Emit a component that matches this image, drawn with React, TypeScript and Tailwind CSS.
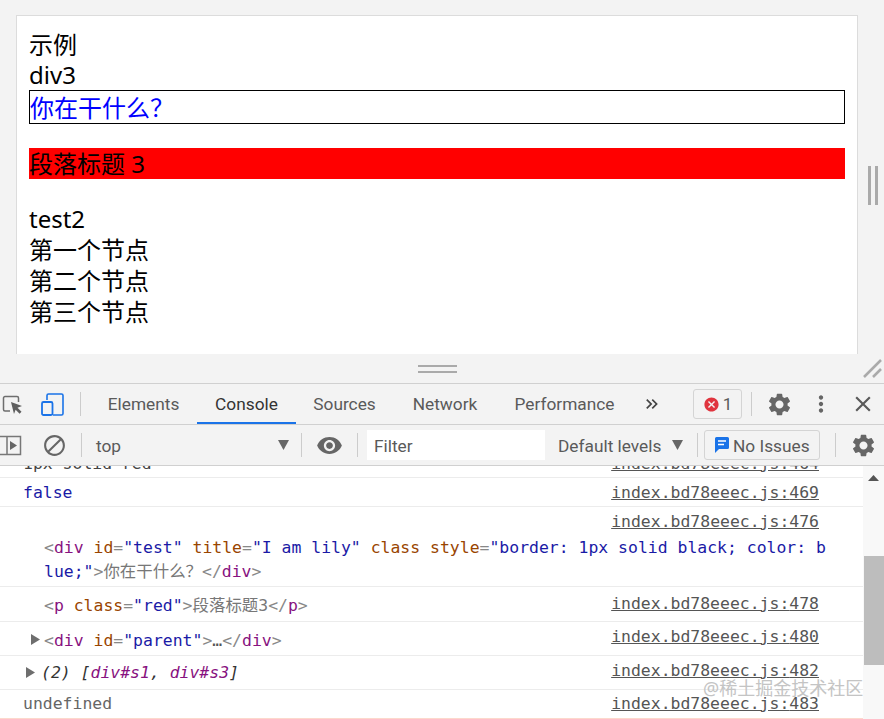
import * as React from 'react';
import {
  MdBlock,
  MdCancel,
  MdClose,
  MdKeyboardDoubleArrowRight,
  MdMoreVert,
  MdSettings,
  MdVisibility,
} from 'react-icons/md';

const sans = "font-['Noto_Sans','Noto_Sans_CJK_SC',sans-serif]";
const ui = "font-['Roboto','Noto_Sans',sans-serif]";
const mono = "font-['DejaVu_Sans_Mono','Noto_Sans_CJK_SC',monospace]";

const Divider = ({ className = '' }: { className?: string }) => (
  <div className={`w-px h-[24px] bg-[#ccc] shrink-0 ${className}`} />
);

const Tag = ({ children }: { children: React.ReactNode }) => <span className="text-[#881280]">{children}</span>;
const Br = ({ children }: { children: React.ReactNode }) => <span className="text-[#888]">{children}</span>;
const Attr = ({ children }: { children: React.ReactNode }) => <span className="text-[#994500]">{children}</span>;
const Val = ({ children }: { children: React.ReactNode }) => <span className="text-[#1a1aa6]">{children}</span>;

type RowProps = {
  h: string;
  line: string;
  children: React.ReactNode;
  pl?: string;
  last?: boolean;
  leftClass?: string;
  linkClass?: string;
};

const Row = ({ h, line, children, pl = 'pl-[23px]', last, leftClass = '', linkClass = '' }: RowProps) => (
  <div className={`${h} ${pl} pr-[44px] flex items-center justify-between border-b ${last ? 'border-[#fdd8cc]' : 'border-[#ececec]'} whitespace-nowrap`}>
    <div className={`flex items-center ${leftClass}`}>{children}</div>
    <div className={linkClass}>
      <span className="underline text-[#555]">index.bd78eeec.js:{line}</span>
    </div>
  </div>
);

const Arrow = ({ className = '' }: { className?: string }) => (
  <svg width="9" height="11" viewBox="0 0 9 11" className={className}>
    <polygon points="0,0 9,5.5 0,11" fill="#6e6e6e" />
  </svg>
);

const tabs = [
  { label: 'Elements', w: 'w-[107px]' },
  { label: 'Console', w: 'w-[99px]', active: true },
  { label: 'Sources', w: 'w-[97px]' },
  { label: 'Network', w: 'w-[104px]' },
  { label: 'Performance', w: 'w-[135px]' },
];

export default function App() {
  return (
    <div className={`relative w-[884px] h-[719px] overflow-hidden bg-white ${sans}`}>
      {/* Page preview */}
      <div className="relative h-[384px] bg-[#f3f3f3] border-b border-[#d0d0d0] pl-[16px] pt-[15px]">
        <div className="w-[842px] h-[339px] bg-white border border-[#dcdcdc] border-b-0 px-[12px] pt-[13px] text-[24px] leading-[31px] text-black">
          <div>示例</div>
          <div className="h-[30px] leading-[29px]">div3</div>
          <div className="h-[34px] border border-black pt-px text-[#0000ff]">你在干什么？</div>
          <div className="h-[31px] mt-[24px] bg-[#ff0000]">段落标题 3</div>
          <div className="mt-[24px]">test2</div>
          <div>第一个节点</div>
          <div>第二个节点</div>
          <div>第三个节点</div>
        </div>
        <div className="absolute left-[868px] top-[166px] w-[3px] h-[39px] bg-[#aaa]" />
        <div className="absolute left-[875px] top-[166px] w-[3px] h-[39px] bg-[#aaa]" />
        <div className="absolute left-[418px] top-[365px] w-[39px] h-[2px] bg-[#aaa]" />
        <div className="absolute left-[418px] top-[371px] w-[39px] h-[2px] bg-[#aaa]" />
        <svg className="absolute left-[862px] top-[359px]" width="20" height="20" viewBox="0 0 20 20">
          <path d="M2 18L19 1M11 18L19 10" stroke="#aaa" strokeWidth="2.5" fill="none" />
        </svg>
      </div>

      {/* Tabs toolbar */}
      <div className={`h-[41px] bg-[#f3f3f3] border-b border-[#d0d0d0] flex items-center text-[#5a5a5a] text-[17.3px] ${ui}`}>
        <svg className="ml-[2px] shrink-0" width="21" height="21" viewBox="0 0 21 21">
          <path d="M8 17H3a1.5 1.5 0 0 1-1.5-1.500V4A1.500 1.500 0 0 1 3 2.500h12A1.500 1.500 0 0 1 16.500 4v4" stroke="#6e6e6e" strokeWidth="1.500" fill="none" />
          <path d="M9 8l11 4-4.500 1.800 4 4-1.900 1.900-4-4L12 20z" fill="#5f5f5f" />
        </svg>
        <svg className="ml-[18px] shrink-0" width="23" height="23" viewBox="0 0 23 23">
          <path d="M6 7V2.500A1.500 1.500 0 0 1 7.500 1h13A1.500 1.500 0 0 1 22 2.500v18a1.500 1.500 0 0 1-1.500 1.500H12" stroke="#1a73e8" strokeWidth="1.600" fill="none" />
          <rect x="1" y="9" width="10.500" height="13" rx="1.500" stroke="#1a73e8" strokeWidth="1.800" fill="none" />
        </svg>
        <Divider className="ml-[16px] mr-[9px]" />
        {tabs.map((t) => (
          <div
            key={t.label}
            className={`${t.w} h-[40px] pt-[3px] flex items-center justify-center border-b-2 shrink-0 ${t.active ? 'border-[#1a73e8] text-[#333]' : 'border-transparent'}`}
          >
            {t.label}
          </div>
        ))}
        <MdKeyboardDoubleArrowRight className="ml-[10px] shrink-0 text-[#444]" size={20} />
        <div className="ml-[31px] w-[49px] h-[30px] border border-[#d4d4d4] rounded-[3px] flex items-center justify-center gap-[3px] shrink-0">
          <MdCancel className="text-[#e0343e]" size={17} />
          <span className="text-[17px] leading-none">1</span>
        </div>
        <Divider className="ml-[9px]" />
        <MdSettings className="ml-[14px] shrink-0 text-[#666]" size={27} />
        <MdMoreVert className="ml-[15px] shrink-0 text-[#666]" size={26} />
        <MdClose className="ml-[16px] shrink-0 text-[#5a5a5a]" size={26} />
      </div>

      {/* Console toolbar */}
      <div className={`h-[41px] bg-[#f3f3f3] border-b border-[#d0d0d0] flex items-center text-[#5a5a5a] text-[17.3px] ${ui}`}>
        <svg className="shrink-0" width="22" height="21" viewBox="0 0 22 21">
          <path d="M0 1.500h20.500v18H0M7 1.500v18" stroke="#777" strokeWidth="1.500" fill="none" />
          <polygon points="10,6 17,10.500 10,15" fill="#666" />
        </svg>
        <MdBlock className="ml-[20px] shrink-0 text-[#666]" size={25} />
        <Divider className="ml-[14px]" />
        <span className="ml-[14px] w-[182px] shrink-0 pt-[3px]">top</span>
        <svg className="shrink-0" width="11" height="10" viewBox="0 0 11 10"><polygon points="0,0 11,0 5.500,10" fill="#666" /></svg>
        <Divider className="ml-[12px]" />
        <MdVisibility className="ml-[14px] shrink-0 text-[#666]" size={27} />
        <Divider className="ml-[14px]" />
        <div className="ml-[9px] w-[178px] h-[30px] bg-white flex items-center pl-[7px] pt-[3px] shrink-0">Filter</div>
        <span className="ml-[13px] w-[114px] shrink-0 whitespace-nowrap pt-[3px]">Default levels</span>
        <svg className="shrink-0" width="11" height="10" viewBox="0 0 11 10"><polygon points="0,0 11,0 5.500,10" fill="#666" /></svg>
        <Divider className="ml-[14px]" />
        <div className="ml-[6px] w-[116px] h-[30px] border border-[#d4d4d4] rounded-[3px] flex items-center pl-[10px] gap-[4px] shrink-0 whitespace-nowrap">
          <svg width="14" height="16" viewBox="0 0 14 16" className="shrink-0">
            <path d="M1.500 0h11A1.500 1.500 0 0 1 14 1.500v9a1.500 1.500 0 0 1-1.500 1.500H4l-4 4V1.500A1.500 1.500 0 0 1 1.500 0z" fill="#1a73e8" />
            <path d="M3 4h8M3 7.500h6" stroke="#fff" strokeWidth="1.400" />
          </svg>
          <span className="pt-[3px]">No Issues</span>
        </div>
        <Divider className="ml-[15px]" />
        <MdSettings className="ml-[14px] shrink-0 text-[#666]" size={27} />
      </div>

      {/* Console output */}
      <div className={`flex h-[253px] overflow-hidden text-[16.45px] leading-[24px] ${mono} text-[#444]`}>
        <div className="flex-1 min-w-0">
          <div className="h-[11px] overflow-hidden border-b border-[#ececec] pl-[23px] pr-[44px] whitespace-nowrap box-content">
            <div className="flex justify-between -mt-[14px]">
              <span>1px solid red</span>
              <span className="underline text-[#555]">index.bd78eeec.js:464</span>
            </div>
          </div>
          <Row h="h-[29px]" line="469" leftClass="pt-[2px]" linkClass="pt-[2px]"><span className="text-[#1a1aa6]">false</span></Row>
          <div className="h-[80px] border-b border-[#ececec] pr-[44px] pt-[3px] whitespace-nowrap">
            <div className="flex justify-end h-[26px]">
              <span className="underline text-[#555] h-[24px]">index.bd78eeec.js:476</span>
            </div>
            <div className="pl-[44px] -mr-[10px]">
              <Br>&lt;</Br><Tag>div</Tag> <Attr>id</Attr><Br>=</Br><Val>"test"</Val> <Attr>title</Attr><Br>=</Br><Val>"I am lily"</Val> <Attr>class</Attr> <Attr>style</Attr><Br>=</Br><Val>"border: 1px solid black; color: b</Val>
            </div>
            <div className="pl-[44px]">
              <Val>lue;"</Val><Br>&gt;</Br><span className="text-[#777]">你在干什么？</span><Br>&lt;/</Br><Tag>div</Tag><Br>&gt;</Br>
            </div>
          </div>
          <Row h="h-[35px]" line="478" pl="pl-[44px]" leftClass="pt-[4px]">
            <Br>&lt;</Br><Tag>p</Tag>&nbsp;<Attr>class</Attr><Br>=</Br><Val>"red"</Val><Br>&gt;</Br><span className="text-[#777]">段落标题3</span><Br>&lt;/</Br><Tag>p</Tag><Br>&gt;</Br>
          </Row>
          <Row h="h-[34px]" line="480" pl="pl-[31px]" leftClass="pt-[4px]" linkClass="pb-[4px]">
            <Arrow className="mr-[4px] -mt-[3px]" />
            <Br>&lt;</Br><Tag>div</Tag>&nbsp;<Attr>id</Attr><Br>=</Br><Val>"parent"</Val><Br>&gt;</Br><span className="text-[#555]">…</span><Br>&lt;/</Br><Tag>div</Tag><Br>&gt;</Br>
          </Row>
          <Row h="h-[34px]" line="482" pl="pl-[26px]" linkClass="pb-[4px]">
            <Arrow className="mr-[6px]" />
            <span className="italic text-[#333]">(2) [<Tag>div#s1</Tag>, <Tag>div#s3</Tag>]</span>
          </Row>
          <Row h="h-[29px]" line="483" last><span className="text-[#666]">undefined</span></Row>
        </div>

        {/* Scrollbar */}
        <div className="w-[21px] shrink-0 bg-[#f8f8f8] flex flex-col items-end">
          <svg className="mt-[9px] mr-[5px]" width="11" height="6" viewBox="0 0 11 6"><polygon points="5.500,0 11,6 0,6" fill="#555" /></svg>
          <div className="w-[20px] h-[109px] mt-[75px] bg-[#bdbdbd]" />
        </div>
      </div>

      <div className={`absolute left-[703px] top-[677px] text-[18px] leading-[22px] text-[#c4c4c4] whitespace-nowrap ${sans}`}>
        @稀土掘金技术社区
      </div>
    </div>
  );
}
